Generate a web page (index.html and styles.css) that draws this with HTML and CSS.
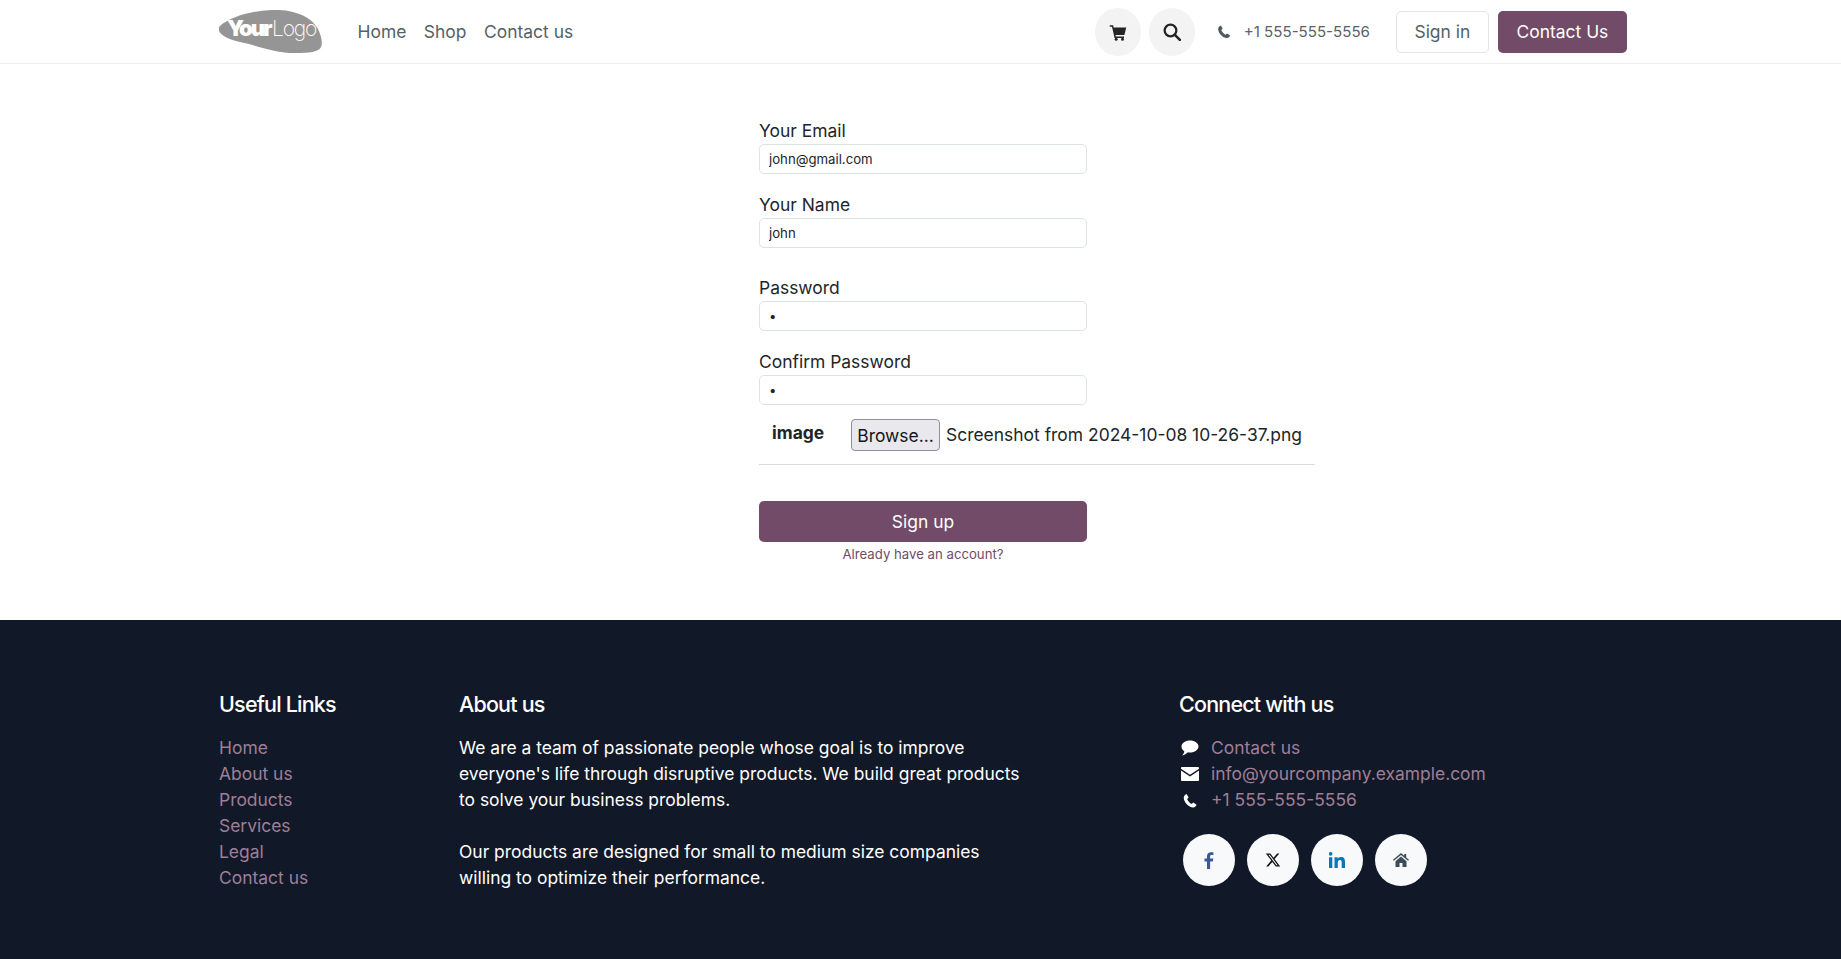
FILE: index.html
```html
<!DOCTYPE html>
<html lang="en">
<head>
<meta charset="utf-8">
<title>Sign up</title>
<link rel="stylesheet" href="styles.css">
</head>
<body>
<header class="site-header">
  <div class="header-inner">
    <a class="logo" href="#">
      <svg width="104" height="44" viewBox="0 0 104 44">
        <path fill="#959595" d="M1 16C10 8 30 1 52 0c22-1 40 6 47 19 3 6 5 14 3 18-2 5-12 6-26 6-16 0-32-5-46-9C14 31 3 27 0 21c-.5-2 0-4 1-5z"/>
        <text x="8" y="26" class="logo-your">Your</text>
        <text x="53" y="26" class="logo-logo">Logo</text>
      </svg>
    </a>
    <nav class="main-nav">
      <a href="#">Home</a>
      <a href="#">Shop</a>
      <a href="#">Contact us</a>
    </nav>
    <div class="header-right">
      <a class="round-btn" href="#" aria-label="Cart">
        <svg width="18" height="18" viewBox="0 0 24 24"><path fill="#212529" d="M1 3h4.500l.7 3H23l-2.500 10H8.700l.4 2H20v2H7.400L4 5H1z"/><circle fill="#212529" cx="9.500" cy="21.500" r="2"/><circle fill="#212529" cx="18" cy="21.500" r="2"/></svg>
      </a>
      <a class="round-btn" href="#" aria-label="Search">
        <svg width="18" height="18" viewBox="0 0 24 24"><circle cx="10" cy="10" r="7.800" fill="none" stroke="#212529" stroke-width="3"/><path d="M15.500 15.500l7 7" stroke="#212529" stroke-width="3.500" stroke-linecap="round"/></svg>
      </a>
      <a class="header-phone" href="#">
        <svg width="14" height="15" viewBox="0 0 24 24"><path fill="#4f5a5f" d="M6.600 1.500C4.500 2.300 2 4.500 2 7.500c0 7 8 15.500 15 15.500 3 0 5-2.300 5.500-4.200l-5.300-3.500-2.500 2.300c-2.800-1.200-6.300-5-7.300-8.200l2.400-2.400z"/></svg>
        <span>+1 555-555-5556</span>
      </a>
      <a class="btn-outline" href="#">Sign in</a>
      <a class="btn-primary" href="#">Contact Us</a>
    </div>
  </div>
</header>

<main class="signup">
  <form class="signup-form">
    <div class="field">
      <label for="email">Your Email</label>
      <input id="email" type="text" value="john@gmail.com">
    </div>
    <div class="field">
      <label for="name">Your Name</label>
      <input id="name" type="text" value="john">
    </div>
    <div class="field field-gap">
      <label for="pw">Password</label>
      <input id="pw" type="password" value="a">
    </div>
    <div class="field">
      <label for="pw2">Confirm Password</label>
      <input id="pw2" type="password" value="a">
    </div>
    <div class="file-row">
      <span class="file-label">image</span>
      <button class="browse" type="button">Browse...</button>
      <span class="file-name">Screenshot from 2024-10-08 10-26-37.png</span>
    </div>
    <hr class="rule">
    <button class="submit" type="button">Sign up</button>
    <a class="have-account" href="#">Already have an account?</a>
  </form>
</main>

<footer class="site-footer">
  <div class="footer-grid">
    <section>
      <h5>Useful Links</h5>
      <ul class="links">
        <li><a href="#">Home</a></li>
        <li><a href="#">About us</a></li>
        <li><a href="#">Products</a></li>
        <li><a href="#">Services</a></li>
        <li><a href="#">Legal</a></li>
        <li><a href="#">Contact us</a></li>
      </ul>
    </section>
    <section>
      <h5>About us</h5>
      <p class="about">We are a team of passionate people whose goal is to improve everyone's life through disruptive products. We build great products to solve your business problems.</p>
      <p class="about">Our products are designed for small to medium size companies willing to optimize their performance.</p>
    </section>
    <section>
      <h5>Connect with us</h5>
      <ul class="contact">
        <li>
          <svg width="18" height="16" viewBox="0 0 18 16"><path fill="#fff" d="M9 .5c4.700 0 8.500 2.700 8.500 6S13.700 12.500 9 12.500c-.8 0-1.500-.1-2.200-.2C5.500 13.800 3.500 15 1 15.500c1-1 2-2.300 2.300-4.300C1.500 10.100.5 8.400.5 6.500.5 3.200 4.300.5 9 .5z"/></svg>
          <a href="#">Contact us</a>
        </li>
        <li>
          <svg width="18" height="14" viewBox="0 0 18 14"><path fill="#fff" d="M1 0h16c.6 0 1 .4 1 1v.8l-9 6-9-6V1c0-.6.4-1 1-1zM0 3.600l9 6 9-6V13c0 .6-.4 1-1 1H1c-.6 0-1-.4-1-1z"/></svg>
          <a href="#">info@yourcompany.example.com</a>
        </li>
        <li>
          <svg width="18" height="15" viewBox="0 0 24 24"><path fill="#fff" d="M6.600 1.500C4.500 2.300 2 4.500 2 7.500c0 7 8 15.500 15 15.500 3 0 5-2.300 5.500-4.200l-5.300-3.500-2.500 2.300c-2.800-1.200-6.300-5-7.300-8.200l2.400-2.400z"/></svg>
          <a href="#">+1 555-555-5556</a>
        </li>
      </ul>
      <div class="social">
        <a href="#" aria-label="Facebook"><svg width="10" height="17" viewBox="0 0 10 17"><path fill="#3b5998" d="M3 17V9.500H.5v-3H3V4.300C3 1.600 4.600.2 7 .2c1.100 0 2.100.1 2.400.1v2.700H7.700c-1.300 0-1.600.6-1.600 1.500v2h3.200l-.4 3H6.100V17z"/></svg></a>
        <a href="#" aria-label="X"><svg width="16" height="16" viewBox="0 0 24 24"><path fill="#111" d="M18.244 2.250h3.308l-7.227 8.260 8.502 11.240H16.170l-5.214-6.817L4.990 21.750H1.680l7.730-8.835L1.254 2.250H8.080l4.713 6.231zm-1.161 17.520h1.833L7.084 4.126H5.117z"/></svg></a>
        <a href="#" aria-label="LinkedIn"><svg width="16" height="16" viewBox="0 0 16 16"><path fill="#0a77b5" d="M0 5.300h3.300V16H0zM1.650 0a1.800 1.800 0 1 1 0 3.700 1.800 1.800 0 0 1 0-3.700zM5.500 5.300h3.100v1.500c.6-1 1.800-1.800 3.400-1.800 3.200 0 4 2 4 4.900V16h-3.300v-5.300c0-1.400-.3-2.700-1.800-2.700s-2.100 1.200-2.100 2.700V16H5.500z"/></svg></a>
        <a href="#" aria-label="Home"><svg width="16" height="14" viewBox="0 0 16 14"><path fill="#3d4d57" d="M8 0l3.200 2.700V1h2v3.400L16 6.800l-.9 1L8 1.900.9 7.800 0 6.800zM2.500 8.200L8 3.600l5.500 4.600V14H9.500v-4h-3v4h-4z"/></svg></a>
      </div>
    </section>
  </div>
</footer>
</body>
</html>
```

FILE: styles.css
```css
* { box-sizing: border-box; }
html, body { margin: 0; height: 100%; }
body {
  font-family: Inter, "Liberation Sans", sans-serif;
  font-size: 17.45px;
  line-height: 26px;
  color: #212529;
  background: #fff;
  display: flex;
  flex-direction: column;
  overflow: hidden;
}
a { text-decoration: none; color: inherit; }

.site-header {
  height: 64px;
  flex: none;
  border-bottom: 1px solid #eef0f1;
  padding: 0 214px 0 219px;
}
.header-inner { height: 63px; display: flex; align-items: center; }
.logo { display: block; height: 44px; width: 104px; }
.logo-your { font: 900 22px Inter, sans-serif; fill: #fff; letter-spacing: -2px; }
.logo-logo { font: 200 21px Inter, sans-serif; fill: #fff; letter-spacing: -1.2px; }
.main-nav { display: flex; gap: 17.5px; margin-left: 34.5px; color: #555f66; }
.header-right { margin-left: auto; display: flex; align-items: center; }
.round-btn {
  width: 46px;
  height: 48px;
  border-radius: 50%;
  background: #f3f3f3;
  display: flex;
  align-items: center;
  justify-content: center;
  margin-right: 8px;
}
.header-phone {
  display: flex;
  align-items: center;
  gap: 13px;
  margin-left: 14px;
  margin-right: 26px;
  color: #5b6268;
  font-size: 15.1px;
}
.btn-outline {
  height: 42px;
  padding: 0 17.5px;
  border: 1px solid #e4e4e4;
  border-radius: 5px;
  display: flex;
  align-items: center;
  color: #555f66;
}
.btn-primary {
  height: 42px;
  padding: 0 18.7px;
  margin-left: 9px;
  border-radius: 5px;
  background: #714b67;
  color: #fff;
  display: flex;
  align-items: center;
}

.signup { height: 556px; flex: none; padding: 54px 0 0 759px; }
.signup-form { width: 556px; display: flex; flex-direction: column; align-items: flex-start; }
.field { width: 328px; margin-bottom: 18px; }
.field-gap { margin-top: 9px; }
.field label { display: block; height: 26px; line-height: 26px; color: #212529; }
.field input {
  display: block;
  width: 100%;
  height: 30px;
  padding: 0 9px;
  border: 1px solid #dee2e6;
  border-radius: 5px;
  font: 13.2px Inter, sans-serif;
  color: #212529;
  background: #fff;
  outline: none;
}
.file-row { display: flex; align-items: center; height: 32px; margin-top: -4px; width: 100%; }
.file-label { width: 92px; padding-left: 13px; font-weight: 700; position: relative; top: -2px; }
.browse {
  height: 32px;
  width: 89px;
  padding: 0;
  border: 1px solid #8f8f9d;
  border-radius: 4px;
  background: #e9e9ed;
  font: 17.45px Inter, sans-serif;
  color: #15141a;
}
.file-name { margin-left: 6px; white-space: nowrap; }
.rule { width: 100%; height: 1px; margin: 13px 0 36px; border: 0; background: #dddddd; }
.submit {
  display: block;
  width: 328px;
  height: 41px;
  border: 0;
  border-radius: 5px;
  background: #714b67;
  color: #fff;
  font: 17.45px Inter, sans-serif;
}
.have-account {
  width: 328px;
  text-align: center;
  font-size: 13.2px;
  line-height: 24px;
  color: #714b67;
}

.site-footer {
  flex: 1;
  background: #111827;
  color: #fff;
  padding: 70px 0 0 219px;
}
.footer-grid { display: grid; grid-template-columns: 240px 720px 1fr; }
.site-footer h5 {
  margin: 0 0 17px;
  font-size: 21.5px;
  font-weight: 500;
  line-height: 28px;
  letter-spacing: -0.8px;
}
.links, .contact { list-style: none; margin: 0; padding: 0; }
.links a, .contact a { color: #9f7f98; }
.about { margin: 0 0 26px; width: 570px; }
.contact li { display: flex; align-items: center; gap: 12px; height: 26px; padding-left: 2px; }
.social { display: flex; gap: 12px; margin-top: 21px; padding-left: 4px; }
.social a {
  width: 52px;
  height: 52px;
  border-radius: 50%;
  background: #f8f9fa;
  display: flex;
  align-items: center;
  justify-content: center;
}
```
